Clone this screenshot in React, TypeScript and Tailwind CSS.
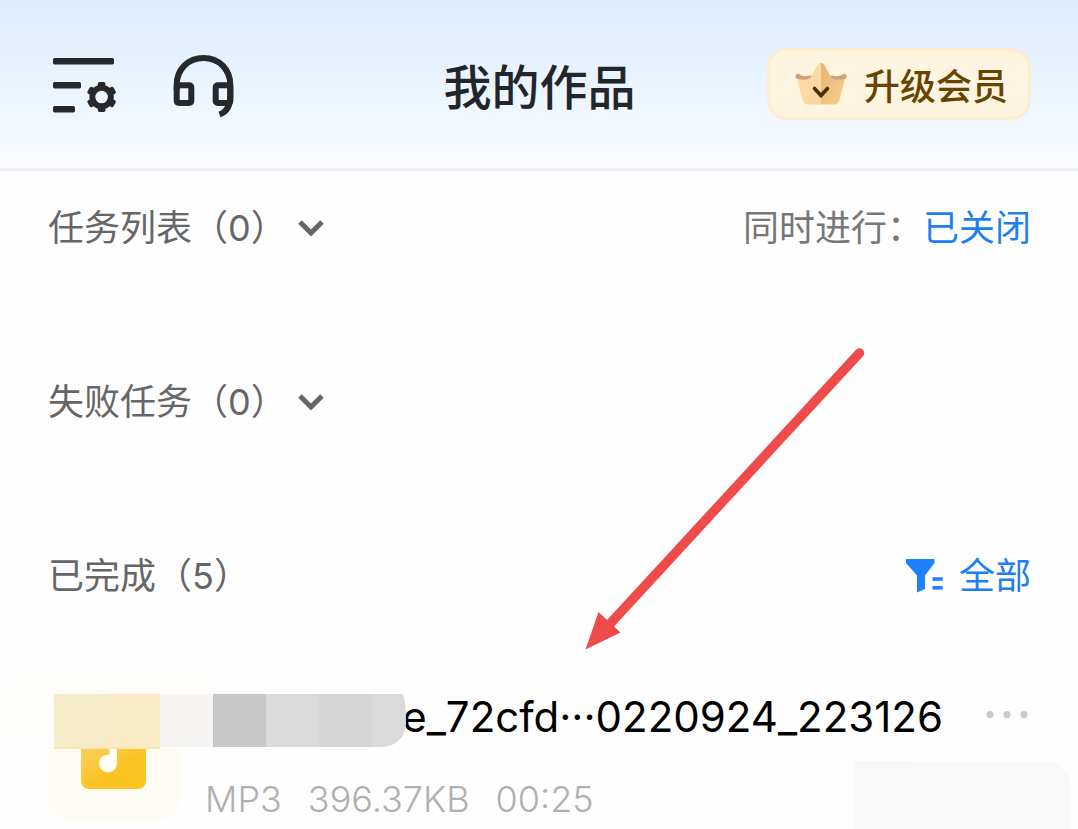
import { useState } from "react";

const MOSAIC = ["bg-[#f5ebc9]", "bg-[#f9ebc5]", "bg-[#f5f4f2]", "bg-[#c8c8c8]", "bg-[#dadada]", "bg-[#d5d5d5]"];

function MenuGearIcon() {
  return (
    <svg viewBox="48 48 72 72" className="size-[72px]" fill="#26282b" aria-hidden="true">
      <rect x="53" y="58" width="61" height="6.4" rx="1.6" />
      <rect x="53" y="82" width="28" height="6.4" rx="1.6" />
      <rect x="53" y="106" width="22" height="6.4" rx="1.6" />
      <g transform="translate(101.6 97)">
        {[0, 60, 120].map((deg) => (
          <rect key={deg} x="-3.8" y="-15" width="7.6" height="30" rx="1.8" transform={`rotate(${deg})`} />
        ))}
        <circle r="12.2" />
        <circle r="6.3" fill="#eef6ff" />
      </g>
    </svg>
  );
}

function HeadsetIcon() {
  return (
    <svg viewBox="168 48 72 72" className="size-[72px]" fill="none" stroke="#26282b" strokeWidth="6" aria-hidden="true">
      <path d="M176.7 90V85C176.7 69 188.5 58 203.5 58S230.3 69 230.3 85V96C230.3 106 227 112 219.5 114.5" />
      <rect x="176.7" y="85.2" width="14.6" height="17.8" rx="2" />
      <rect x="215.7" y="85.2" width="14.6" height="17.8" rx="2" />
    </svg>
  );
}

function CrownIcon() {
  return (
    <svg viewBox="0 0 54 44" className="h-11 w-[54px]" aria-hidden="true">
      <defs>
        <linearGradient id="crownLeft" x1="0" y1="0" x2="1" y2="1">
          <stop offset="0" stopColor="#fddcae" />
          <stop offset="1" stopColor="#fcd59c" />
        </linearGradient>
        <linearGradient id="crownRight" x1="0" y1="0" x2="1" y2="1">
          <stop offset="0" stopColor="#e6b271" />
          <stop offset="1" stopColor="#fbcf8f" />
        </linearGradient>
      </defs>
      <path d="M4 14.5Q9 18 16 16" fill="none" stroke="#cfa274" strokeWidth="5" strokeLinecap="round" />
      <path d="M50 14.5Q45 18 38 16" fill="none" stroke="#cfa274" strokeWidth="5" strokeLinecap="round" />
      <path d="M27 1Q24.5 1 22.5 5L17 15Q14 19 3 17L9 39Q10 42.5 14 42.5H27Z" fill="url(#crownLeft)" />
      <path d="M27 1Q29.5 1 31.5 5L37 15Q40 19 51 17L45 39Q44 42.5 40 42.5H27Z" fill="url(#crownRight)" />
      <path d="M20.5 26.5L27 33.5L33.5 26.5" fill="none" stroke="#4a2d08" strokeWidth="3.6" strokeLinecap="round" />
    </svg>
  );
}

function Chevron({ open }: { open: boolean }) {
  return (
    <svg viewBox="0 0 28 20" className={open ? "h-5 w-7 rotate-180" : "h-5 w-7"} aria-hidden="true">
      <path d="M3 4L14 15L25 4" fill="none" stroke="#666" strokeWidth="5" />
    </svg>
  );
}

function FilterIcon() {
  return (
    <svg viewBox="0 0 38 36" className="h-9 w-[38px]" fill="#1b82fb" aria-hidden="true">
      <path d="M1 1H29.5V5L20 17.5V31L12 34.5V17.5L1 5Z" />
      <rect x="27.5" y="19.2" width="10.2" height="3.6" />
      <rect x="27.5" y="28" width="10.2" height="3.6" />
    </svg>
  );
}

function MusicIcon() {
  return (
    <svg viewBox="0 0 66 70" className="h-[70px] w-[66px]" aria-hidden="true">
      <defs>
        <linearGradient id="music" x1="0" y1="0" x2="0.6" y2="1">
          <stop offset="0.4" stopColor="#f8cd58" />
          <stop offset="0.8" stopColor="#fac321" />
        </linearGradient>
      </defs>
      <rect width="65" height="70" rx="8" fill="url(#music)" />
      <circle cx="27" cy="44.5" r="9" fill="#fffdf6" />
      <path d="M28.5 14H36V45H28.5Z" fill="#fffdf6" />
    </svg>
  );
}

function TaskGroup({ label, count }: { label: string; count: number }) {
  const [open, setOpen] = useState(false);
  return (
    <button type="button" aria-expanded={open} onClick={() => setOpen(!open)} className="flex items-center gap-2.5 text-[#666]">
      <span>{label}（{count}）</span>
      <Chevron open={open} />
    </button>
  );
}

export default function App() {
  return (
    <div className="relative min-h-screen overflow-hidden bg-[#fefefe] font-[Inter,'Noto_Sans_CJK_SC',sans-serif]">
      <header className="grid grid-cols-[1fr_auto_1fr] items-center border-b-[3px] border-[#f0f1f5] bg-linear-to-b from-[#daecff] to-[#fafcff] py-12 pr-[47px] pl-12">
        <div className="flex gap-12">
          <button type="button" aria-label="设置"><MenuGearIcon /></button>
          <button type="button" aria-label="客服"><HeadsetIcon /></button>
        </div>
        <h1 className="pt-2 text-5xl leading-[64px] font-medium text-[#22262b]">我的作品</h1>
        <button type="button" className="flex h-[72px] items-center gap-4 justify-self-end rounded-[20px] border-[3px] border-[#fdecd0] bg-[#fff4e0] pr-5 pl-6 text-4xl font-medium text-[#654500]">
          <CrownIcon />
          <span className="pt-1.5">升级会员</span>
        </button>
      </header>

      <main className="pt-[30px] pb-2 text-4xl leading-[54px]">
        <div className="flex flex-col gap-[120px] pr-[47px] pl-12">
          <div className="flex items-center justify-between">
            <TaskGroup label="任务列表" count={0} />
            <div className="flex text-[#777]">
              <span>同时进行：</span>
              <button type="button" className="text-[#1f7ff0]">已关闭</button>
            </div>
          </div>
          <TaskGroup label="失败任务" count={0} />
          <div className="flex items-center justify-between">
            <h2 className="text-[#666]">已完成（5）</h2>
            <button type="button" className="flex items-center gap-4 text-[#1f7ff0]">
              <FilterIcon />
              全部
            </button>
          </div>
        </div>

        <ul className="mt-[84px]">
          <li className="relative flex gap-6 px-[47px]">
            <div className="flex size-[134px] shrink-0 items-center justify-center rounded-3xl bg-[#fffcf5]">
              <MusicIcon />
            </div>
            <div className="flex flex-1 flex-col justify-between">
              <div className="flex items-center justify-end gap-10">
                <span className="text-[42px] leading-[60px] whitespace-nowrap text-black">e_72cfd···0220924_223126</span>
                <button type="button" aria-label="更多">
                  <svg viewBox="0 0 48 12" className="h-3 w-12" fill="#c9c9c9" aria-hidden="true">
                    <circle cx="7" cy="3.6" r="3.6" />
                    <circle cx="24" cy="3.6" r="3.6" />
                    <circle cx="41" cy="3.6" r="3.6" />
                  </svg>
                </button>
              </div>
              <div className="flex gap-[26px] leading-[44px] font-light text-[#b0b0b0]">
                <span>MP3</span>
                <span>396.37KB</span>
                <span>00:25</span>
              </div>
            </div>

            {/* masked part of the file name */}
            <div className="absolute -top-5 left-0 h-20 w-[214px] rounded-tl-3xl bg-[#fffefd]" />
            <div className="absolute top-[7px] left-[54px] flex h-[53px] overflow-hidden rounded-[0_4px_24px_0/0_30px_24px_0]">
              {MOSAIC.map((tone, i) => (
                <span key={i} className={`w-[53px] ${tone}`} />
              ))}
              <span className="w-[34px] bg-[#dadada]" />
            </div>
            <div className="absolute top-[60px] left-[54px] h-0.5 w-[106px] bg-[#fae7ae]" />
            <div className="absolute top-[74px] right-2 -bottom-2 flex w-[267px]">
              <span className="w-[52px] rounded-tl-3xl bg-[#fdfdfd]" />
              <span className="w-[52px] bg-[#f8f8f8]" />
              <span className="flex-1 rounded-tr-3xl bg-[#f9f9f9]" />
            </div>
          </li>
        </ul>
      </main>

      <svg viewBox="0 0 282 304" className="pointer-events-none absolute top-[347px] left-[584px] h-[304px] w-[282px]" aria-hidden="true">
        <path d="M275.5 6L24 279" stroke="#f04b4b" strokeWidth="9.5" strokeLinecap="round" />
        <path d="M1.5 302.5L14.5 265L36.5 285.5Z" fill="#f04b4b" />
      </svg>
    </div>
  );
}
